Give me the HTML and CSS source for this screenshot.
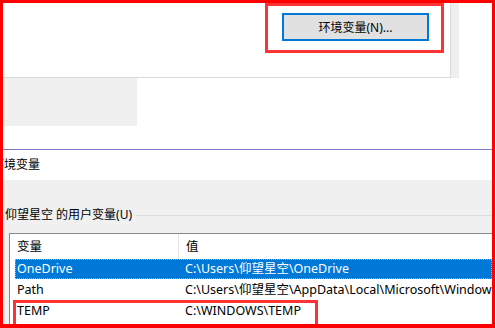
FILE: index.html
```html
<!DOCTYPE html>
<html lang="zh-CN">
<head>
  <meta charset="UTF-8">
  <title>环境变量</title>
  <link rel="stylesheet" href="styles.css">
</head>
<body>
  <div class="frame">
    <div class="top">
      <div class="panel">
        <div class="mark-box">
          <button class="btn">环境变量(N)...</button>
        </div>
      </div>
      <div class="strip"></div>
    </div>

    <div class="mid">
      <div class="gray-block"></div>
    </div>

    <div class="rule"></div>
    <div class="title">环境变量</div>

    <div class="group">
      <div class="group-head">
        <span class="group-label">仰望星空 的用户变量(U)</span>
        <span class="group-line"></span>
      </div>

      <div class="list">
        <div class="list-head">
          <div class="col-name">变量</div>
          <div class="col-value">值</div>
        </div>
        <div class="row selected">
          <div class="cell-name">OneDrive</div>
          <div class="cell-value">C:\Users\仰望星空\OneDrive</div>
        </div>
        <div class="row">
          <div class="cell-name">Path</div>
          <div class="cell-value">C:\Users\仰望星空\AppData\Local\Microsoft\WindowsApps;</div>
        </div>
        <div class="row marked">
          <div class="cell-name">TEMP</div>
          <div class="cell-value">C:\WINDOWS\TEMP</div>
        </div>
      </div>
    </div>
  </div>
</body>
</html>
```

FILE: styles.css
```css
* {
  margin: 0;
  padding: 0;
  box-sizing: border-box;
}

body {
  width: 495px;
  height: 328px;
  overflow: hidden;
  background: #fff;
  font-family: 'Noto Sans', 'Noto Sans CJK SC', sans-serif;
  font-size: 12px;
  color: #000;
}

.frame {
  width: 495px;
  height: 328px;
  border: 3px solid #ff0000;
  border-bottom-width: 4px;
  overflow: hidden;
  display: flex;
  flex-direction: column;
  background: #fff;
}

/* top: system properties panel */
.top {
  display: flex;
  height: 75px;
  flex-shrink: 0;
}

.panel {
  width: 448px;
  background: #fff;
  border-right: 1px solid #dadada;
  border-bottom: 1px solid #dadada;
  display: flex;
  justify-content: flex-end;
  align-items: flex-start;
  padding-right: 6px;
}

.strip {
  width: 8px;
  background: #eeeeee;
}

.mark-box {
  border: 3px solid #ff3333;
  padding: 7px 12px 9px 14px;
}

.btn {
  display: block;
  width: 147px;
  height: 28px;
  border: 2px solid #0078d7;
  background: #e1e1e1;
  font-family: inherit;
  font-size: 12px;
  color: #000;
}

.mid {
  height: 71px;
  flex-shrink: 0;
}

.gray-block {
  width: 134px;
  height: 48px;
  background: #f0f0f0;
}

.rule {
  height: 1px;
  background: #7b7bc8;
  flex-shrink: 0;
}

.title {
  height: 30px;
  line-height: 30px;
  text-indent: -11px;
  white-space: nowrap;
  flex-shrink: 0;
}

/* group box */
.group {
  flex: 1;
  background: #f0f0f0;
  display: flex;
  flex-direction: column;
}

.group-head {
  display: flex;
  align-items: center;
  height: 16px;
  margin-top: 27px;
  padding-left: 2px;
}

.group-label {
  line-height: 16px;
  white-space: nowrap;
}

.group-line {
  flex: 1;
  height: 1px;
  margin-left: 4px;
  background: #dcdcdc;
}

.list {
  flex: 1;
  margin-top: 10px;
  margin-left: 6px;
  border-left: 1px solid #828790;
  border-top: 1px solid #828790;
  background: #fff;
  font-size: 12.5px;
}

.list-head {
  display: grid;
  grid-template-columns: 169px 1fr;
  height: 25px;
  line-height: 25px;
}

.col-name {
  padding-left: 7px;
  border-right: 1px solid #e5e5e5;
}

.col-value {
  padding-left: 7px;
}

.row {
  display: grid;
  grid-template-columns: 170px 1fr;
  height: 20px;
  line-height: 20px;
  margin-left: 5px;
  white-space: nowrap;
  position: relative;
}

.row + .row {
  height: 21px;
  line-height: 21px;
}

.cell-name {
  padding-left: 2px;
}

.cell-value {
  overflow: hidden;
}

.row.selected {
  background: #0078d7;
  color: #fff;
  outline: 1px dotted #f0a040;
  outline-offset: -1px;
}

.row.marked::after {
  content: '';
  position: absolute;
  left: -2px;
  top: 0;
  width: 299px;
  height: 25px;
  border: 3px solid #ff3333;
}
```
